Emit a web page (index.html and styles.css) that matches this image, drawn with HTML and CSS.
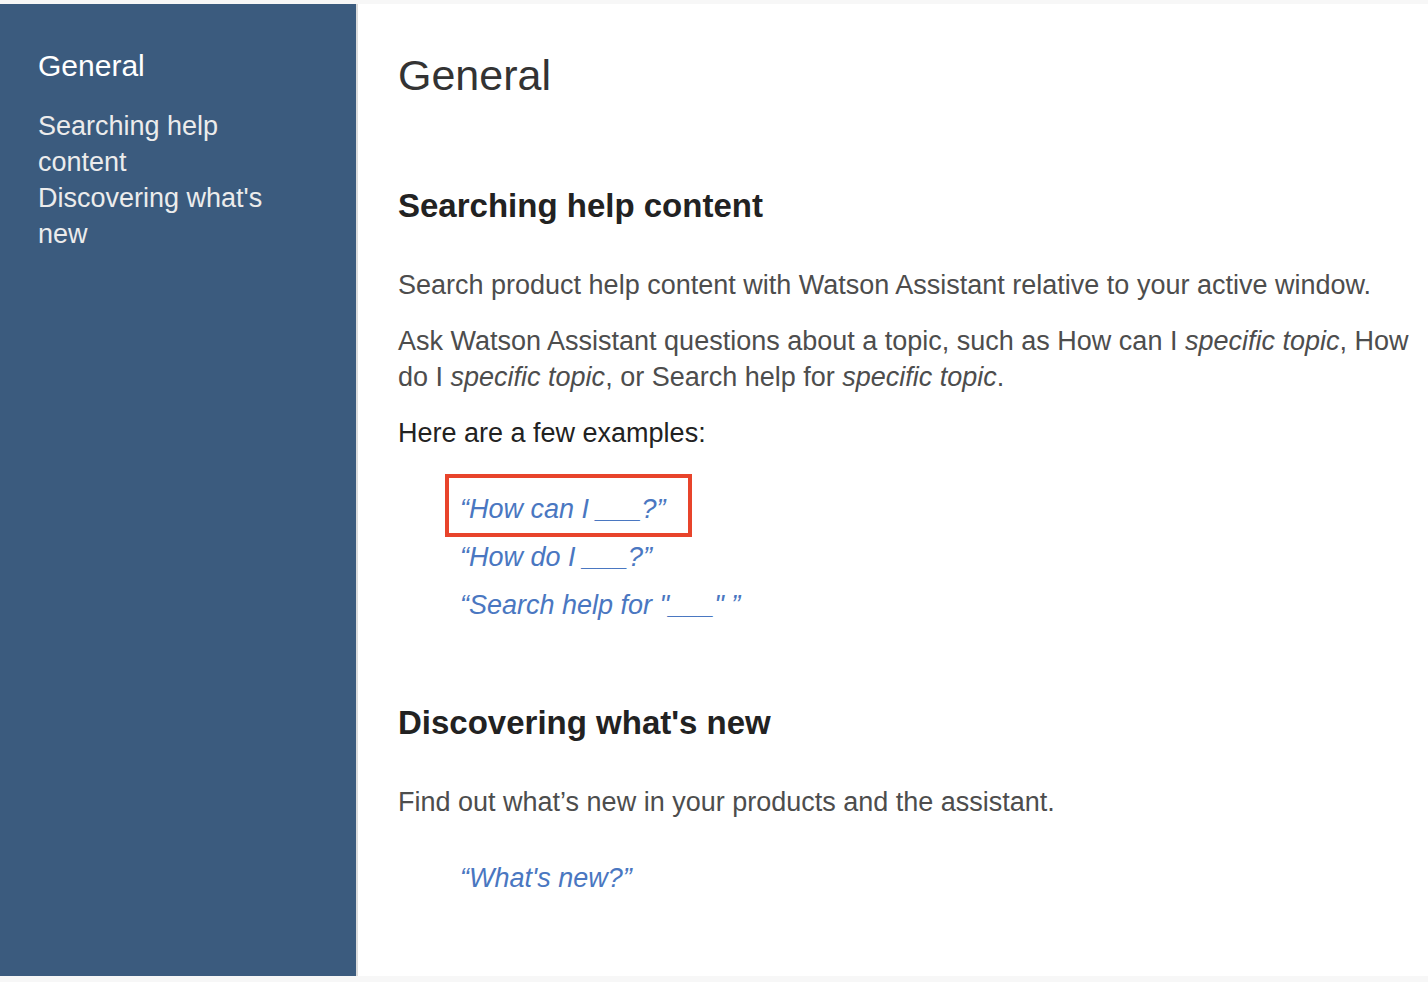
FILE: index.html
```html
<!DOCTYPE html>
<html lang="en">

<head>
    <meta charset="utf-8">
    <meta name="viewport" content="width=device-width, initial-scale=1.0">
    <title>General - Help</title>
    <link rel="stylesheet" href="styles.css">
</head>

<body>
    <div class="page">
        <nav class="toc">
            <h2 class="toc__title">General</h2>
            <a class="toc__link" href="#searching">Searching help content</a>
            <a class="toc__link" href="#discovering">Discovering what's new</a>
        </nav>

        <main class="doc">
            <h1 class="doc__title">General</h1>

            <section class="doc__section" id="searching">
                <h2 class="doc__heading">Searching help content</h2>
                <p class="doc__text">Search product help content with Watson Assistant relative to your active window.</p>
                <p class="doc__text">Ask Watson Assistant questions about a topic, such as How can I <em>specific topic</em>, How do I <em>specific topic</em>, or Search help for <em>specific topic</em>.</p>
                <p class="doc__text doc__text--dark">Here are a few examples:</p>
                <ul class="examples">
                    <li class="examples__item examples__item--marked"><a class="examples__link" href="#">“How can I ___?”</a></li>
                    <li class="examples__item"><a class="examples__link" href="#">“How do I ___?”</a></li>
                    <li class="examples__item"><a class="examples__link" href="#">“Search help for "___" ”</a></li>
                </ul>
            </section>

            <section class="doc__section doc__section--second" id="discovering">
                <h2 class="doc__heading">Discovering what's new</h2>
                <p class="doc__text">Find out what’s new in your products and the assistant.</p>
                <ul class="examples">
                    <li class="examples__item"><a class="examples__link" href="#">“What's new?”</a></li>
                </ul>
            </section>
        </main>
    </div>
</body>

</html>
```

FILE: styles.css
```css
body {
    --color-sidebar: #3b5b7e;
    --color-link: #4a77c1;
    --color-text: #4d4d4d;
    --color-heading: #222222;
    margin: 0;
    height: 982px;
    overflow: hidden;
    background: #f7f7f7;
    font-family: "Liberation Sans", Arial, sans-serif;
}

.page {
    display: flex;
    height: 972px;
    margin-top: 4px;
}

/* sidebar */

.toc {
    display: flex;
    flex-direction: column;
    width: 318px;
    flex-shrink: 0;
    padding: 44px 0 0 38px;
    background: var(--color-sidebar);
    border-right: 2px solid #dcdcdc;
}

.toc__title {
    margin: 0 0 24px;
    font-size: 30px;
    font-weight: normal;
    line-height: 36px;
    color: #ffffff;
}

.toc__link {
    width: 240px;
    font-size: 27px;
    line-height: 36px;
    color: #ececec;
    text-decoration: none;
}

/* content */

.doc {
    flex: 1;
    padding: 45px 0 0 40px;
    background: #ffffff;
    color: var(--color-text);
}

.doc__title {
    margin: 0;
    font-size: 43px;
    font-weight: normal;
    line-height: 52px;
    color: #333333;
}

.doc__section {
    margin-top: 85px;
}

.doc__section--second {
    margin-top: 74px;
}

.doc__heading {
    margin: 0 0 41px;
    font-size: 33px;
    font-weight: bold;
    line-height: 40px;
    color: var(--color-heading);
}

.doc__text {
    margin: 0 0 20px;
    font-size: 27px;
    line-height: 36px;
}

.doc__text--dark {
    color: var(--color-heading);
}

.examples {
    list-style: none;
    margin: 34px 0 0;
    padding: 0 0 0 62px;
}

.examples__item {
    position: relative;
    font-size: 27px;
    line-height: 48px;
}

.examples__link {
    color: var(--color-link);
    font-style: italic;
    text-decoration: none;
}

.examples__item--marked::before {
    content: "";
    position: absolute;
    left: -15px;
    top: -11px;
    width: 239px;
    height: 55px;
    border: 4px solid #e8442b;
}
```
